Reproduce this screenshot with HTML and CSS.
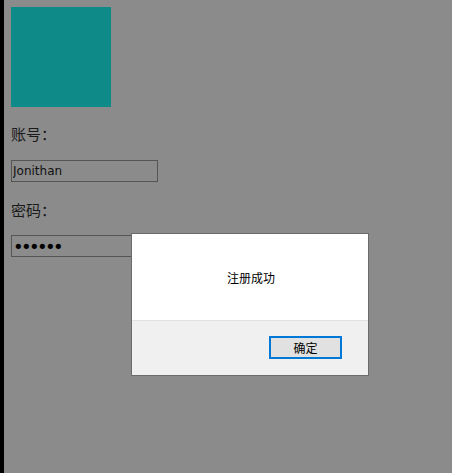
FILE: index.html
```html
<!DOCTYPE html>
<html lang="zh-CN">
<head>
  <meta charset="UTF-8" />
  <title>注册</title>
  <link rel="stylesheet" href="styles.css">
</head>
<body>
  <div class="page">
    <div class="logo"></div>

    <form class="login-form">
      <label class="field-label" for="uid">账号：</label>
      <input type="text" id="uid" class="field-input" value="Jonithan" />
      <label class="field-label" for="pwd">密码：</label>
      <input type="password" id="pwd" class="field-input pwd" value="123456" />
    </form>
  </div>

  <div class="dialog">
    <div class="dialog-body">注册成功</div>
    <div class="dialog-footer">
      <button class="dialog-btn">确定</button>
    </div>
  </div>
</body>
</html>
```

FILE: styles.css
```css
html, body {
  margin: 0;
  padding: 0;
  height: 100%;
  background-color: #000;
  font-family: "Noto Sans CJK SC", "Microsoft YaHei", sans-serif;
}

.page {
  margin-left: 4px;
  height: 100%;
  box-sizing: border-box;
  padding: 7px;
  background-color: #8b8b8b;
  display: flex;
  flex-direction: column;
  align-items: flex-start;
}

.logo {
  width: 100px;
  height: 100px;
  background-color: #0e8b88;
}

.login-form {
  display: flex;
  flex-direction: column;
  align-items: flex-start;
}

.field-label {
  font-size: 15px;
  line-height: 20px;
  height: 20px;
  color: #1a1a1a;
  margin-top: 17px;
}

.field-label + .field-input {
  margin-top: 16px;
}

.field-input + .field-label {
  margin-top: 18px;
}

.field-input {
  width: 147px;
  height: 22px;
  box-sizing: border-box;
  border: 1px solid #555;
  background-color: #8b8b8b;
  padding: 0 1px;
  margin: 0;
  font-family: "DejaVu Sans", sans-serif;
  font-size: 12px;
  color: #111;
  outline: none;
}

.field-input.pwd {
  margin-top: 15px;
  font-size: 18px;
  letter-spacing: -2.6px;
  color: #000;
}

.dialog {
  position: absolute;
  left: 131px;
  top: 233px;
  width: 238px;
  height: 143px;
  box-sizing: border-box;
  border: 1px solid #6b6b6b;
  background-color: #f0f0f0;
  display: flex;
  flex-direction: column;
}

.dialog-body {
  height: 86px;
  background-color: #fff;
  border-bottom: 1px solid #e3e3e3;
  display: flex;
  align-items: center;
  justify-content: center;
  font-size: 12px;
  color: #000;
  padding-left: 2px;
}

.dialog-footer {
  display: flex;
  justify-content: flex-end;
  padding: 15px 26px 0 0;
}

.dialog-btn {
  width: 73px;
  height: 23px;
  box-sizing: border-box;
  border: 2px solid #0078d7;
  background-color: #e1e1e1;
  font-family: "Noto Sans CJK SC", sans-serif;
  font-size: 12px;
  color: #000;
  padding: 0;
  cursor: pointer;
}
```
